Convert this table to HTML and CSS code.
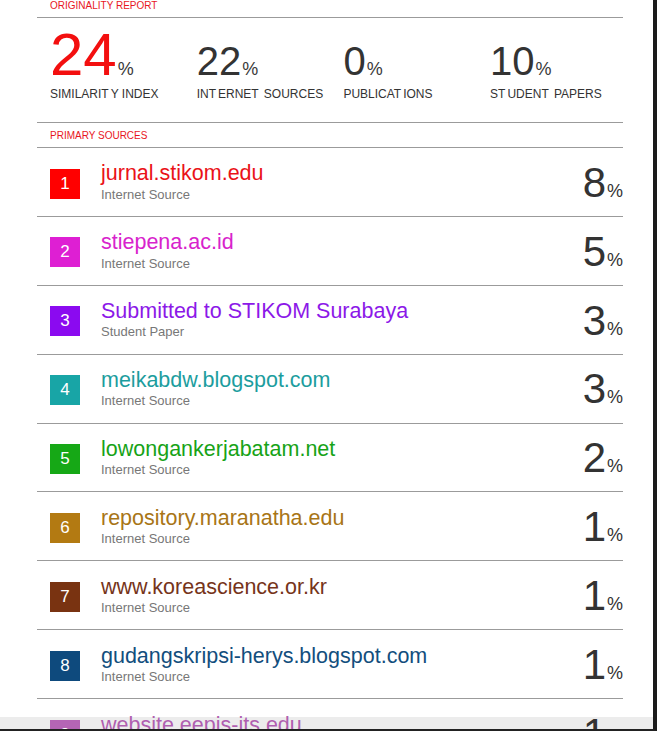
FILE: index.html
```html
<!DOCTYPE html>
<html lang="en">
<head>
<meta charset="utf-8">
<title>Originality Report</title>
<link rel="stylesheet" href="styles.css">
</head>
<body>
<div class="viewer">
  <div class="sheet">
    <div class="section-title">ORIGINALITY REPORT</div>
    <div class="stats">
      <div class="stat">
        <div class="value"><span class="num big">24</span><span class="pct">%</span></div>
        <div class="label">SIMILARIT<span class="k">Y</span> INDEX</div>
      </div>
      <div class="stat">
        <div class="value"><span class="num">22</span><span class="pct">%</span></div>
        <div class="label">INT<span class="k">ERNET</span> <span class="k">SOURCES</span></div>
      </div>
      <div class="stat">
        <div class="value"><span class="num">0</span><span class="pct">%</span></div>
        <div class="label">PUBLICAT<span class="k">IONS</span></div>
      </div>
      <div class="stat">
        <div class="value"><span class="num">10</span><span class="pct">%</span></div>
        <div class="label">ST<span class="k">UDENT</span> <span class="k">PAPERS</span></div>
      </div>
    </div>
    <div class="section-title primary">PRIMARY SOURCES</div>
    <ol class="sources">
      <li class="source c1"><span class="badge">1</span><div class="info"><div class="name">jurnal.stikom.edu</div><div class="type">Internet Source</div></div><div class="share"><span class="n">8</span><span class="pct">%</span></div></li>
      <li class="source c2"><span class="badge">2</span><div class="info"><div class="name">stiepena.ac.id</div><div class="type">Internet Source</div></div><div class="share"><span class="n">5</span><span class="pct">%</span></div></li>
      <li class="source c3"><span class="badge">3</span><div class="info"><div class="name">Submitted to STIKOM Surabaya</div><div class="type">Student Paper</div></div><div class="share"><span class="n">3</span><span class="pct">%</span></div></li>
      <li class="source c4"><span class="badge">4</span><div class="info"><div class="name">meikabdw.blogspot.com</div><div class="type">Internet Source</div></div><div class="share"><span class="n">3</span><span class="pct">%</span></div></li>
      <li class="source c5"><span class="badge">5</span><div class="info"><div class="name">lowongankerjabatam.net</div><div class="type">Internet Source</div></div><div class="share"><span class="n">2</span><span class="pct">%</span></div></li>
      <li class="source c6"><span class="badge">6</span><div class="info"><div class="name">repository.maranatha.edu</div><div class="type">Internet Source</div></div><div class="share"><span class="n">1</span><span class="pct">%</span></div></li>
      <li class="source c7"><span class="badge">7</span><div class="info"><div class="name">www.koreascience.or.kr</div><div class="type">Internet Source</div></div><div class="share"><span class="n">1</span><span class="pct">%</span></div></li>
      <li class="source c8"><span class="badge">8</span><div class="info"><div class="name">gudangskripsi-herys.blogspot.com</div><div class="type">Internet Source</div></div><div class="share"><span class="n">1</span><span class="pct">%</span></div></li>
      <li class="source c9"><span class="badge">9</span><div class="info"><div class="name">website.eepis-its.edu</div><div class="type">Internet Source</div></div><div class="share"><span class="n">1</span><span class="pct">%</span></div></li>
    </ol>
  </div>
</div>
</body>
</html>
```
FILE: styles.css
```css
html, body {
  margin: 0;
  padding: 0;
  background: #fff;
}

body {
  height: 731px;
  overflow: hidden;
  font-family: "Liberation Sans", Arial, sans-serif;
  color: #333;
}

.viewer {
  width: 653px;
  height: 729px;
  overflow: hidden;
  border-right: 4px solid #1b1b1b;
  border-bottom: 2px solid #222;
  background: linear-gradient(to bottom, #fff 0, #fff 717px, #ececec 717px, #ececec 100%);
}

.sheet {
  margin-left: 37px;
  width: 586px;
}

.section-title {
  font-size: 10px;
  line-height: 12px;
  height: 17px;
  padding-left: 13px;
  color: #e8161e;
  border-bottom: 1px solid #9b9b9b;
}

.section-title.primary {
  padding-top: 7px;
}

.stats {
  display: grid;
  grid-template-columns: repeat(4, 146.7px);
  padding: 7px 0 0 13px;
  height: 97px;
  border-bottom: 1px solid #9b9b9b;
}

.value {
  font-size: 60px;
  line-height: 60px;
  height: 60px;
  white-space: nowrap;
  color: #333;
}

.value .num {
  font-size: 40px;
  line-height: 1;
}

.value .num.big {
  font-size: 60px;
  color: #f30f0f;
}

.value .pct {
  font-size: 18px;
  line-height: 1;
  margin-left: 1px;
  color: #3a3a3a;
}

.label {
  margin-top: 2px;
  font-size: 12px;
  line-height: 14px;
  white-space: nowrap;
  color: #333;
}

.label .k {
  margin-left: 2px;
}

.sources {
  list-style: none;
  margin: 0;
  padding: 0;
}

.source {
  display: flex;
  align-items: flex-start;
  box-sizing: border-box;
  height: 68.9px;
  padding-left: 13px;
  border-bottom: 1px solid #9b9b9b;
}

.badge {
  flex: none;
  width: 30px;
  height: 30px;
  margin-top: 20.5px;
  background: var(--c);
  color: #fff;
  font-size: 17px;
  line-height: 30px;
  text-align: center;
}

.info {
  flex: 1;
  min-width: 0;
  margin-left: 21px;
  padding-top: 13.4px;
}

.name {
  font-size: 21.5px;
  line-height: 24px;
  white-space: nowrap;
  color: var(--t);
}

.type {
  margin-top: 1.3px;
  font-size: 13px;
  line-height: 16px;
  color: #777;
}

.share {
  flex: none;
  padding-top: 13.8px;
  font-size: 42px;
  line-height: 42px;
  color: #333;
  white-space: nowrap;
}

.share .n {
  line-height: 1;
}

.share .pct {
  font-size: 18px;
  line-height: 1;
  margin-left: 1px;
}

.c1 { --c: #ff0000; --t: #ea1218; }
.c2 { --c: #de1fd3; --t: #d823cc; }
.c3 { --c: #8b0af0; --t: #8c18e8; }
.c4 { --c: #18a5a6; --t: #1c9d9e; }
.c5 { --c: #16a816; --t: #17a317; }
.c6 { --c: #b37a12; --t: #a87516; }
.c7 { --c: #793311; --t: #76341a; }
.c8 { --c: #0e4a7d; --t: #124e7d; }
.c9 { --c: #b565b5; --t: #b05fb0; }
```
